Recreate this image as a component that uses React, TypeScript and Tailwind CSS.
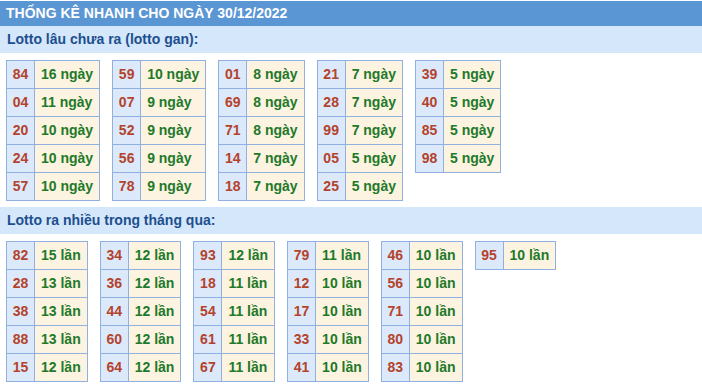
const ganData: [string, string][][] = [
  [["84", "16 ngày"], ["04", "11 ngày"], ["20", "10 ngày"], ["24", "10 ngày"], ["57", "10 ngày"]],
  [["59", "10 ngày"], ["07", "9 ngày"], ["52", "9 ngày"], ["56", "9 ngày"], ["78", "9 ngày"]],
  [["01", "8 ngày"], ["69", "8 ngày"], ["71", "8 ngày"], ["14", "7 ngày"], ["18", "7 ngày"]],
  [["21", "7 ngày"], ["28", "7 ngày"], ["99", "7 ngày"], ["05", "5 ngày"], ["25", "5 ngày"]],
  [["39", "5 ngày"], ["40", "5 ngày"], ["85", "5 ngày"], ["98", "5 ngày"]],
]

const nhieuData: [string, string][][] = [
  [["82", "15 lần"], ["28", "13 lần"], ["38", "13 lần"], ["88", "13 lần"], ["15", "12 lần"]],
  [["34", "12 lần"], ["36", "12 lần"], ["44", "12 lần"], ["60", "12 lần"], ["64", "12 lần"]],
  [["93", "12 lần"], ["18", "11 lần"], ["54", "11 lần"], ["61", "11 lần"], ["67", "11 lần"]],
  [["79", "11 lần"], ["12", "10 lần"], ["17", "10 lần"], ["33", "10 lần"], ["41", "10 lần"]],
  [["46", "10 lần"], ["56", "10 lần"], ["71", "10 lần"], ["80", "10 lần"], ["83", "10 lần"]],
  [["95", "10 lần"]],
]

function StatTable({ rows }: { rows: [string, string][] }) {
  return (
    <div className="grid grid-cols-[28px_auto] auto-rows-[28px] border-l border-t border-[#8fb0e0] leading-[27px]">
      {rows.map(([num, val], idx) => (
        <>
          <div key={"n" + idx} className="border-r border-b border-[#8fb0e0] bg-[#dce9fb] text-center text-[#b3432c]">{num}</div>
          <div key={"v" + idx} className="whitespace-nowrap border-r border-b border-[#8fb0e0] bg-[#fdf3e1] px-[6px] text-[#21792a]">{val}</div>
        </>
      ))}
    </div>
  )
}

function Section({ title, groups }: { title: string; groups: [string, string][][] }) {
  return (
    <div>
      <div className="h-[27px] bg-[#d4e7fb] px-[7px] text-[14px] leading-[27px] text-[#1d4f8e]">{title}</div>
      <div className="flex items-start gap-[12px] px-[6px] pt-[7px] pb-[6px]">
        {groups.map((rows, idx) => (
          <StatTable key={idx} rows={rows} />
        ))}
      </div>
    </div>
  )
}

export default function App() {
  return (
    <div className="w-[702px] h-[384px] overflow-hidden bg-white font-bold text-[14px]" style={{ fontFamily: '"Liberation Sans", Arial, sans-serif' }}>
      <div className="mt-[1px] h-[25px] bg-[#5b96d4] px-[6px] text-[14px] leading-[25px] text-white">
        THỐNG KÊ NHANH CHO NGÀY 30/12/2022
      </div>
      <Section title="Lotto lâu chưa ra (lotto gan):" groups={ganData} />
      <Section title="Lotto ra nhiều trong tháng qua:" groups={nhieuData} />
    </div>
  )
}
